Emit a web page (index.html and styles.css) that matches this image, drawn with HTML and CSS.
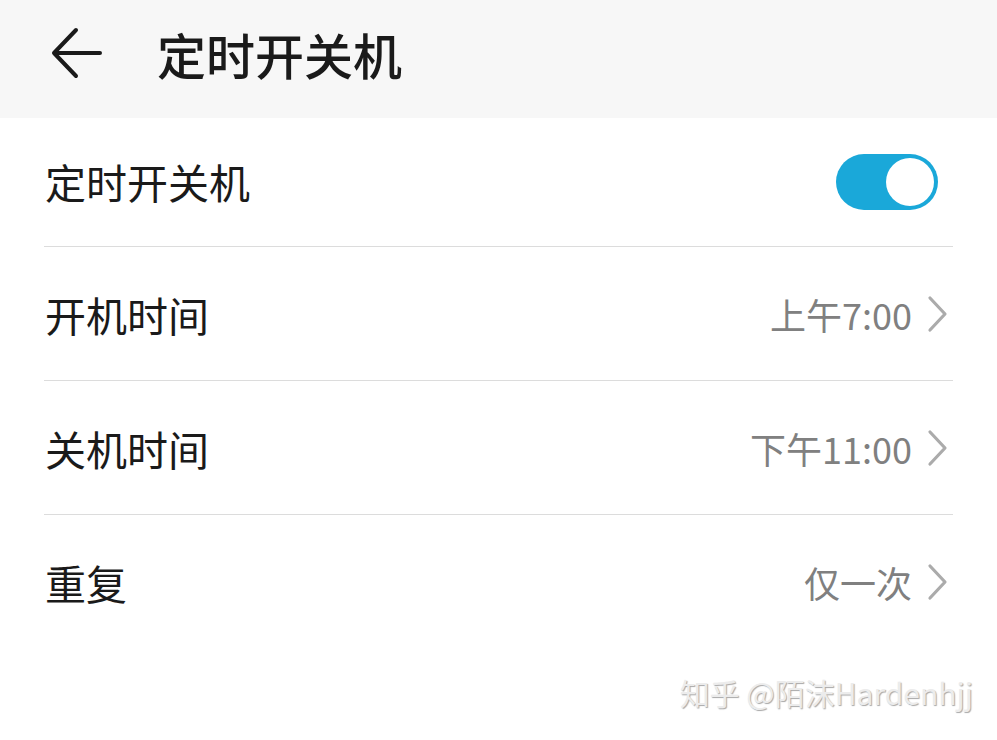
FILE: index.html
```html
<!DOCTYPE html>
<html>
	<head>
		<meta charset="utf-8">
		<link rel="stylesheet" href="styles.css">
	</head>
	<body>
		<div class="topbar">
			<svg class="back" width="52" height="52" viewBox="0 0 52 52">
				<path d="M49 26 H3 M25 3 L3 26 L25 49" fill="none" stroke="#1a1a1a" stroke-width="4" stroke-linecap="round" stroke-linejoin="round"/>
			</svg>
			<h1 class="titlu">定时开关机</h1>
		</div>

		<div class="lista">
			<div class="rand primul">
				<span class="eticheta">定时开关机</span>
				<span class="comutator"><span class="buton"></span></span>
			</div>
			<div class="rand">
				<span class="eticheta">开机时间</span>
				<span class="valoare">上午7:00
					<svg class="sageata" width="22" height="38" viewBox="0 0 22 38"><path d="M3 3 L18 19 L3 35" fill="none" stroke="#ababab" stroke-width="3.2" stroke-linecap="round" stroke-linejoin="round"/></svg>
				</span>
			</div>
			<div class="rand">
				<span class="eticheta">关机时间</span>
				<span class="valoare">下午11:00
					<svg class="sageata" width="22" height="38" viewBox="0 0 22 38"><path d="M3 3 L18 19 L3 35" fill="none" stroke="#ababab" stroke-width="3.2" stroke-linecap="round" stroke-linejoin="round"/></svg>
				</span>
			</div>
			<div class="rand ultimul">
				<span class="eticheta">重复</span>
				<span class="valoare">仅一次
					<svg class="sageata" width="22" height="38" viewBox="0 0 22 38"><path d="M3 3 L18 19 L3 35" fill="none" stroke="#ababab" stroke-width="3.2" stroke-linecap="round" stroke-linejoin="round"/></svg>
				</span>
			</div>
		</div>

		<div class="semn">知乎 @陌沫Hardenhjj</div>
	</body>
</html>
```

FILE: styles.css
```css
body{
	margin: 0;
	background: #ffffff;
	font-family: "Noto Sans CJK SC", "Noto Sans", sans-serif;
	color: #1a1a1a;
	height: 740px;
	position: relative;
	overflow: hidden;
}
.topbar{
	height: 118px;
	background: #f7f7f7;
	display: flex;
	align-items: center;
	padding-left: 51px;
	box-sizing: border-box;
}
.back{
	margin-top: -12px;
}
.titlu{
	margin: -12px 0 0 54px;
	font-size: 49px;
	font-weight: 500;
	letter-spacing: 0;
}
.lista{
	padding: 0 44px;
}
.rand{
	height: 134px;
	display: flex;
	align-items: center;
	justify-content: space-between;
	border-bottom: 1px solid #dcdcdc;
	box-sizing: border-box;
}
.rand.primul{
	height: 129px;
}
.rand.ultimul{
	border-bottom: none;
}
.eticheta{
	font-size: 41px;
	padding-left: 1px;
}
.primul .eticheta{
	margin-bottom: 3px;
}
.valoare{
	display: flex;
	align-items: center;
	font-size: 36px;
	color: #808080;
	padding-right: 4px;
}
.sageata{
	margin-left: 15px;
}
.comutator{
	width: 102px;
	height: 56px;
	border-radius: 28px;
	background: #1aa8d9;
	margin-right: 15px;
	display: flex;
	justify-content: flex-end;
	align-items: center;
	padding: 4px;
	box-sizing: border-box;
}
.buton{
	width: 48px;
	height: 48px;
	border-radius: 50%;
	background: #ffffff;
	box-sizing: border-box;
}
.semn{
	position: absolute;
	right: 24px;
	bottom: 26px;
	font-size: 30px;
	color: #ececec;
	text-shadow: 1px 1px 1px #a8a8a8;
	letter-spacing: 0;
}
```
